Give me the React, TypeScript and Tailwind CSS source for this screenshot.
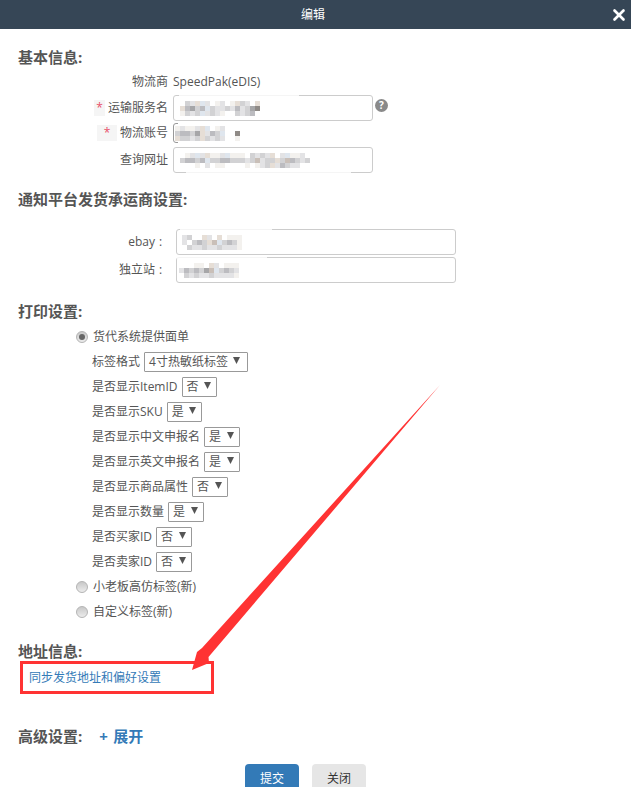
import React from 'react';
import { X } from 'lucide-react';

const FONT = "font-['Open_Sans','Noto_Sans_CJK_SC',sans-serif]";

// palette for the pixelated (redacted) input values
const PALETTE: Record<string, string> = {
  '.': '#ffffff',
  a: '#f3f1ee',
  b: '#e3e3e5',
  c: '#d2d2d4',
  d: '#bcbcc0',
  e: '#a6a6a8',
  f: '#e6ded6',
  g: '#dfe6ee',
  h: '#c9bfb8',
  i: '#8f8a86',
};

const Mosaic = ({ rows }: { rows: string[] }) => (
  <span className="flex flex-col blur-[0.4px]">
    {rows.map((row, r) => (
      <span key={r} className="flex h-[5px]">
        {row.split('').map((c, i) => (
          <span key={i} className="h-full w-[5px]" style={{ backgroundColor: PALETTE[c] }} />
        ))}
      </span>
    ))}
  </span>
);

const SectionTitle = ({ children }: { children: React.ReactNode }) => (
  <h3 className="text-[15px] leading-[20px] font-bold text-[#555]">{children}</h3>
);

const BlurInput = ({
  className,
  rows,
  halo,
  pad = 'pl-[6px]',
  children,
}: {
  className: string;
  rows: string[];
  halo: string;
  pad?: string;
  children?: React.ReactNode;
}) => (
  <div className={`relative flex h-[26px] items-center rounded-[3px] border border-[#ccc] bg-white ${pad} ${className}`}>
    {children}
    <Mosaic rows={rows} />
    <span className={`absolute h-[3px] bg-white/80 ${halo}`} />
  </div>
);

const SelectBox = ({ value, className }: { value: string; className: string }) => (
  <div className={`ml-[4px] flex h-[20px] items-center justify-between rounded-[1px] border border-[#999] bg-white pl-[4px] text-[12px] text-[#555] ${className}`}>
    <span>{value}</span>
    <svg width="7" height="7" viewBox="0 0 7 7" className="mb-[2px]">
      <polygon points="0,0 7,0 3.5,7" fill="#555" />
    </svg>
  </div>
);

const Radio = ({ checked = false }: { checked?: boolean }) => (
  <span className="flex h-[12px] w-[12px] items-center justify-center rounded-full border border-[#b4b4b4] bg-gradient-to-b from-[#c8c8c8] to-[#ececec]">
    {checked && <span className="h-[6px] w-[6px] rounded-full bg-[#666]" />}
  </span>
);

const selectRows = [
  { label: '标签格式', value: '4寸热敏纸标签', w: 'w-[104px] pr-[7px]' },
  { label: '是否显示ItemID', value: '否', w: 'w-[35px] pr-[5px]' },
  { label: '是否显示SKU', value: '是', w: 'w-[35px] pr-[5px]' },
  { label: '是否显示中文申报名', value: '是', w: 'w-[36px] pr-[5px]' },
  { label: '是否显示英文申报名', value: '是', w: 'w-[36px] pr-[5px]' },
  { label: '是否显示商品属性', value: '否', w: 'w-[36px] pr-[5px]' },
  { label: '是否显示数量', value: '是', w: 'w-[36px] pr-[5px]' },
  { label: '是否买家ID', value: '否', w: 'w-[36px] pr-[5px]' },
  { label: '是否卖家ID', value: '否', w: 'w-[36px] pr-[5px]' },
];

const SERVICE_ROWS = ['.cbfgb.ab.afcb.f.', 'fdecdgcbbcbdbcei', 'acbcgbcba..cbcd.'];
const ACCOUNT_ROWS = ['abaabfg.ab....', 'cddcefbdcg..i.', 'fccbcfcbcb..a.'];
const URL_ROWS = ['.abgbfaabgaaa.cbcbf.bgaab.', 'cddcdgccddcccbchbccfchdcbc', '...a.b.aa....a.abcfbdcbb.'];
const EBAY_ROWS = ['bc..fb.f.aaa.', 'b.cdcfhgcdca.', '.cbbcbbcbbba.'];
const SITE_ROWS = ['...aa.fb.aaa.', 'bdcdcehgcdcb.', '.cbcbbcbbbba.'];

export default function App() {
  return (
    <div className={`relative h-[787px] w-[631px] overflow-hidden bg-white text-[12px] text-[#555] ${FONT}`}>
      <header className="flex h-[29px] items-center justify-between bg-[#364656] pl-[301px] pr-[3px] text-white">
        <span className="text-[12px]">编辑</span>
        <X size={18} strokeWidth={3.5} />
      </header>

      <section className="px-[18px] pt-[18px]">
        <SectionTitle>基本信息:</SectionTitle>
        <div className="mt-[5px] flex h-[20px] items-center">
          <span className="w-[150px] text-right">物流商</span>
          <span className="ml-[5px]">SpeedPak(eDIS)</span>
        </div>
        <div className="mt-[3px] flex items-center">
          <span className="flex w-[150px] items-center justify-end pb-[1px]">
            <span className="mr-[3px] flex h-[16px] w-[11px] items-center justify-center bg-[#f5f5f5] text-[#e8506a]">*</span>
            运输服务名
          </span>
          <BlurInput className="ml-[5px] w-[200px]" rows={SERVICE_ROWS} halo="-top-[1px] left-[5px] w-[120px]" />
          <span className="ml-[2px] mb-[6px] flex h-[13px] w-[13px] items-center justify-center rounded-full bg-[#8a8a8a] text-[10px] font-bold text-white">?</span>
        </div>
        <div className="mt-[2px] flex items-center">
          <span className="flex w-[150px] items-center justify-end">
            <span className="mr-[3px] flex h-[16px] w-[20px] items-center justify-center bg-[#f5f5f5] text-[#e8506a]">*</span>
            物流账号
          </span>
          <div className="relative ml-[5px] flex h-[20px] w-[77px] items-center rounded-[3px] border border-[#999] bg-white pl-[1px]">
            {/* white halo of the redaction hides most of this border */}
            <span className="absolute -inset-[1px] left-[4px] bg-white" />
            <span className="relative">
              <Mosaic rows={ACCOUNT_ROWS} />
            </span>
          </div>
        </div>
        <div className="mt-[4px] flex items-center">
          <span className="w-[150px] text-right">查询网址</span>
          <BlurInput className="ml-[5px] w-[200px]" rows={URL_ROWS} halo="-bottom-[1px] left-[12px] w-[165px]">
            <span className="absolute left-[6px] top-[7px] h-[10px] w-[1px] bg-[#8a4a55]" />
          </BlurInput>
        </div>
      </section>

      <section className="px-[18px] pt-[16px]">
        <SectionTitle>通知平台发货承运商设置:</SectionTitle>
        <div className="mt-[20px] flex items-center">
          <span className="flex w-[146px] justify-end">
            ebay
            <span className="w-[9px] pl-[4px]">:</span>
          </span>
          <BlurInput className="ml-[12px] w-[280px]" rows={EBAY_ROWS} halo="-top-[1px] left-[3px] w-[92px]" pad="pl-[5px]" />
        </div>
        <div className="mt-[2px] flex items-center">
          <span className="flex w-[146px] justify-end">
            独立站
            <span className="w-[9px] pl-[4px]">:</span>
          </span>
          <BlurInput className="ml-[12px] w-[280px]" rows={SITE_ROWS} halo="-top-[1px] left-[0px] w-[90px]" pad="pl-[2px]" />
        </div>
      </section>

      <section className="pl-[18px] pt-[18px]">
        <SectionTitle>打印设置:</SectionTitle>
        <div className="mt-[3px] flex flex-col pl-[58px]">
          <label className="flex h-[25px] items-center gap-[5px]">
            <Radio checked />
            <span>货代系统提供面单</span>
          </label>
          {selectRows.map((row) => (
            <div key={row.label} className="flex h-[25px] items-center pl-[16px]">
              <span>{row.label}</span>
              <SelectBox value={row.value} className={row.w} />
            </div>
          ))}
          <label className="flex h-[25px] items-center gap-[5px]">
            <Radio />
            <span>小老板高仿标签(新)</span>
          </label>
          <label className="flex h-[25px] items-center gap-[5px]">
            <Radio />
            <span>自定义标签(新)</span>
          </label>
        </div>
      </section>

      <section className="pl-[18px] pt-[17px]">
        <SectionTitle>地址信息:</SectionTitle>
        <div className="ml-[2px] flex h-[33px] w-[194px] items-center border-[3px] border-[#f33] pl-[6px] text-[#337ab7]">
          同步发货地址和偏好设置
        </div>
      </section>

      <section className="flex items-center pl-[18px] pt-[32px]">
        <SectionTitle>高级设置:</SectionTitle>
        <span className="ml-[17px] flex text-[15px] leading-[20px] font-bold text-[#337ab7]">
          <span className="w-[14px]">+</span>
          展开
        </span>
      </section>

      <footer className="flex gap-[13px] pl-[245px] pt-[18px]">
        <button className="h-[30px] w-[54px] rounded-[4px] bg-[#337ab7] text-[12px] text-white">提交</button>
        <button className="h-[30px] w-[54px] rounded-[4px] bg-[#e6e6e6] text-[12px] text-[#333]">关闭</button>
      </footer>

      {/* annotation arrow over the form */}
      <svg className="absolute left-0 top-0" width="631" height="787" viewBox="0 0 631 787">
        <polygon points="440,385 208.5,657 209,663 192,670 197,652 202,648" fill="#f33" />
      </svg>
    </div>
  );
}
